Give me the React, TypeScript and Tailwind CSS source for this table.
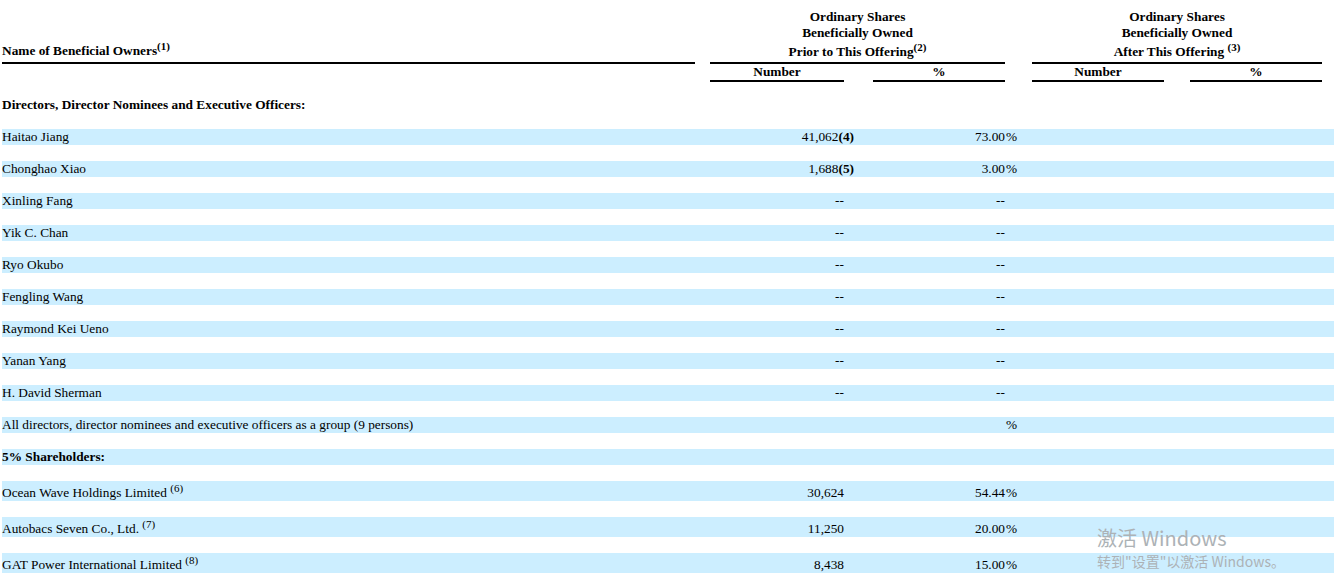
import React from "react";

const cols = "grid w-[1332px] grid-cols-[693px_15px_134px_29px_132px_27px_132px_26px_132px_12px]";

type Row = {
  name: string;
  note?: string;
  num?: string;
  numNote?: string;
  pct?: string;
  sign?: boolean;
  bold?: boolean;
};

const directors: Row[] = [
  { name: "Haitao Jiang", num: "41,062", numNote: "(4)", pct: "73.00", sign: true },
  { name: "Chonghao Xiao", num: "1,688", numNote: "(5)", pct: "3.00", sign: true },
  { name: "Xinling Fang", num: "--", pct: "--" },
  { name: "Yik C. Chan", num: "--", pct: "--" },
  { name: "Ryo Okubo", num: "--", pct: "--" },
  { name: "Fengling Wang", num: "--", pct: "--" },
  { name: "Raymond Kei Ueno", num: "--", pct: "--" },
  { name: "Yanan Yang", num: "--", pct: "--" },
  { name: "H. David Sherman", num: "--", pct: "--" },
  { name: "All directors, director nominees and executive officers as a group (9 persons)", sign: true },
  { name: "5% Shareholders:", bold: true },
];

const holders: Row[] = [
  { name: "Ocean Wave Holdings Limited", note: "(6)", num: "30,624", pct: "54.44", sign: true },
  { name: "Autobacs Seven Co., Ltd.", note: "(7)", num: "11,250", pct: "20.00", sign: true },
  { name: "GAT Power International Limited", note: "(8)", num: "8,438", pct: "15.00", sign: true },
];

function Sup({ children }: { children: React.ReactNode }) {
  return <sup className="text-[11px] leading-none">{children}</sup>;
}

function DataRow({ row, tall }: { row: Row; tall?: boolean }) {
  return (
    <div className={`${cols} ${tall ? "h-5 items-end" : "h-4 items-center"} bg-[#cceeff] leading-4`}>
      <div className={row.bold ? "font-bold" : ""}>
        {row.name}
        {row.note && (
          <>
            {" "}
            <Sup>{row.note}</Sup>
          </>
        )}
      </div>
      <div />
      {row.numNote ? (
        <div className="col-span-2 text-right pr-[19px]">
          {row.num}
          <span className="font-bold">{row.numNote}</span>
        </div>
      ) : (
        <>
          <div className="text-right">{row.num}</div>
          <div />
        </>
      )}
      <div className="text-right">{row.pct}</div>
      <div className="pl-px">{row.sign ? "%" : ""}</div>
    </div>
  );
}

export default function App() {
  return (
    <div className="relative w-[1340px] h-[578px] overflow-hidden bg-white text-black font-['Liberation_Serif','Times_New_Roman',serif] text-[13.33px]">
      <div className="px-[2px] pt-[9px]">
        {/* header */}
        <div className={`${cols} items-end font-bold leading-4`}>
          <div className="border-b-2 border-black pb-[3px]">
            Name of Beneficial Owners<Sup>(1)</Sup>
          </div>
          <div />
          <div className="col-span-3 border-b-2 border-black text-center pb-[2px]">
            <div>Ordinary Shares</div>
            <div>Beneficially Owned</div>
            <div className="pt-[3px]">
              Prior to This Offering<Sup>(2)</Sup>
            </div>
          </div>
          <div />
          <div className="col-span-3 border-b-2 border-black text-center pb-[2px]">
            <div>Ordinary Shares</div>
            <div>Beneficially Owned</div>
            <div className="pt-[3px]">
              After This Offering <Sup>(3)</Sup>
            </div>
          </div>
          <div />
        </div>
        <div className={`${cols} font-bold leading-4`}>
          <div />
          <div />
          <div className="border-b-2 border-black text-center">Number</div>
          <div />
          <div className="border-b-2 border-black text-center">%</div>
          <div />
          <div className="border-b-2 border-black text-center">Number</div>
          <div />
          <div className="border-b-2 border-black text-center">%</div>
          <div />
        </div>

        <div className="mt-[15px] h-4 leading-4 font-bold">Directors, Director Nominees and Executive Officers:</div>

        <div className="mt-4 flex flex-col gap-4">
          {directors.map((r) => (
            <DataRow key={r.name} row={r} />
          ))}
        </div>
        <div className="mt-4 flex flex-col gap-4">
          {holders.map((r) => (
            <DataRow key={r.name} row={r} tall />
          ))}
        </div>
      </div>

      {/* activation watermark */}
      <div className="absolute left-[1097px] top-[526px] text-[#acb2b6] font-['Noto_Sans_CJK_SC','Noto_Sans',sans-serif] pointer-events-none">
        <div className="text-[20px] leading-6">激活 Windows</div>
        <div className="text-[14px] leading-5 mt-[1px]">转到"设置"以激活 Windows。</div>
      </div>
    </div>
  );
}
